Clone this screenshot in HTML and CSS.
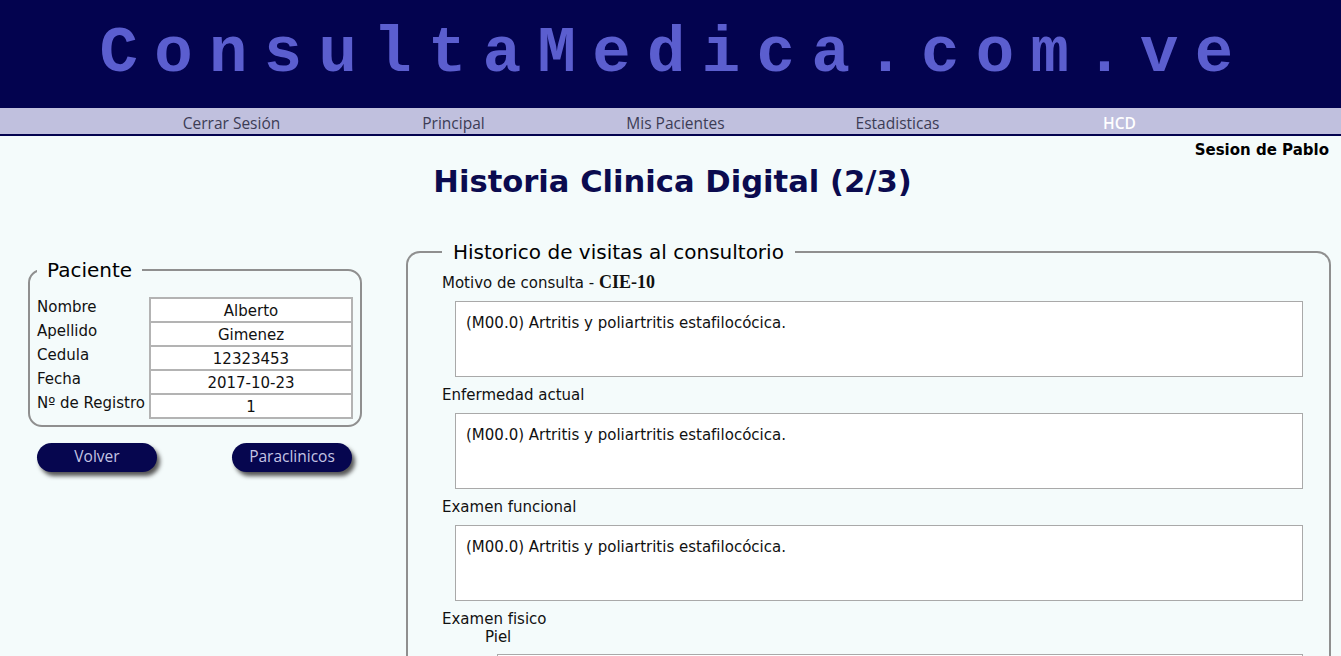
FILE: index.html
```html
<!DOCTYPE html>
<html lang="es">
<head>
<meta charset="utf-8">
<title>ConsultaMedica.com.ve - HCD</title>
<link rel="stylesheet" href="styles.css">
</head>
<body>
<header class="banner">
  <div class="brand">ConsultaMedica.com.ve</div>
</header>
<nav class="menu">
  <a class="menu-item" href="#">Cerrar Sesión</a>
  <a class="menu-item" href="#">Principal</a>
  <a class="menu-item" href="#">Mis Pacientes</a>
  <a class="menu-item" href="#">Estadisticas</a>
  <a class="menu-item active" href="#">HCD</a>
</nav>
<main class="page">
  <div class="session">Sesion de Pablo</div>
  <h1 class="title">Historia Clinica Digital (2/3)</h1>
  <div class="columns">
    <div class="left-col">
      <fieldset class="box patient">
        <legend class="legend">Paciente</legend>
        <table class="ptable">
          <tr><td class="plabel">Nombre</td><td class="pval">Alberto</td></tr>
          <tr><td class="plabel">Apellido</td><td class="pval">Gimenez</td></tr>
          <tr><td class="plabel">Cedula</td><td class="pval">12323453</td></tr>
          <tr><td class="plabel">Fecha</td><td class="pval">2017-10-23</td></tr>
          <tr><td class="plabel">Nº de Registro</td><td class="pval">1</td></tr>
        </table>
      </fieldset>
      <div class="buttons">
        <button class="btn">Volver</button>
        <button class="btn">Paraclinicos</button>
      </div>
    </div>
    <fieldset class="box history">
      <legend class="legend">Historico de visitas al consultorio</legend>
      <div class="flabel first">Motivo de consulta - <b class="cie">CIE-10</b></div>
      <div class="textbox">(M00.0) Artritis y poliartritis estafilocócica.</div>
      <div class="flabel">Enfermedad actual</div>
      <div class="textbox">(M00.0) Artritis y poliartritis estafilocócica.</div>
      <div class="flabel">Examen funcional</div>
      <div class="textbox">(M00.0) Artritis y poliartritis estafilocócica.</div>
      <div class="flabel">Examen fisico</div>
      <div class="sublabel">Piel</div>
      <div class="textbox sub"></div>
    </fieldset>
  </div>
</main>
</body>
</html>
```
FILE: styles.css
```css
html, body {
  margin: 0;
  padding: 0;
}
body {
  background: #f4fbfb;
  font-family: Verdana, "DejaVu Sans", sans-serif;
  color: #111;
  overflow: hidden;
}
.banner {
  background: #03034f;
  height: 108px;
  display: flex;
  align-items: center;
  justify-content: center;
}
.brand {
  font-family: "Liberation Mono", "Courier New", monospace;
  font-weight: bold;
  font-size: 64px;
  letter-spacing: 16.35px;
  color: #5b5ecf;
  line-height: 80px;
  margin-left: 8px;
  margin-top: 0;
}
.menu {
  background: #c0c0de;
  height: 26px;
  border-bottom: 2px solid #03034f;
  display: flex;
  justify-content: center;
  align-items: center;
  padding-left: 10px;
}
.menu-item {
  width: 222px;
  text-align: center;
  font-family: "Open Sans", "Noto Sans", sans-serif;
  font-size: 15.5px;
  color: #3c3c55;
  text-decoration: none;
  line-height: 26px;
  padding-top: 4px;
}
.menu-item.active {
  color: #ffffff;
  font-weight: 600;
}
.page {
  padding: 0;
}
.session {
  text-align: right;
  padding: 5px 12px 0 0;
  font-weight: bold;
  font-size: 15px;
  line-height: 18px;
  color: #000;
}
.title {
  margin: 5px 0 0 4px;
  text-align: center;
  font-size: 30.6px;
  line-height: 36px;
  color: #0b0b4f;
  font-weight: bold;
}
.columns {
  display: flex;
  align-items: flex-start;
  margin-top: 40px;
}
.left-col {
  width: 334px;
  margin-left: 28px;
  margin-top: 18px;
  flex: none;
}
.box {
  border: 2px solid #8f8f8f;
  border-radius: 14px;
  margin: 0;
  min-width: 0;
}
.legend {
  font-size: 20px;
  line-height: 24px;
  padding: 0 11px;
  color: #000;
}
.patient {
  padding: 0 8px 6px 7px;
}
.patient .legend {
  padding: 0 10px;
}
.ptable {
  border-collapse: collapse;
  margin-top: 15px;
  width: 316px;
  font-size: 15px;
}
.plabel {
  width: 112px;
  padding: 0;
  vertical-align: top;
  line-height: 18px;
  white-space: nowrap;
  height: 22px;
}
.pval {
  background: #fff;
  border: 2px solid #b3b3b3;
  text-align: center;
  padding: 0;
  line-height: 20px;
  height: 20px;
  padding-top: 2px;
}
.buttons {
  display: flex;
  justify-content: space-between;
  padding: 0 10px 0 9px;
  margin-top: 16px;
}
.btn {
  width: 120px;
  height: 29px;
  border: none;
  border-radius: 15px;
  background: #06064f;
  color: #c4c4e4;
  font-family: "Open Sans", "Noto Sans", sans-serif;
  font-size: 15.5px;
  line-height: 26px;
  box-shadow: 3px 4px 4px #555;
  padding: 0 0 3px;
}
.history {
  flex: 1;
  margin: 0 10px 0 44px;
  padding: 0 26px 0 34px;
  border-bottom: none;
  border-bottom-left-radius: 0;
  border-bottom-right-radius: 0;
  height: 500px;
}
.flabel {
  font-size: 15px;
  line-height: 18px;
  margin-top: 9px;
}
.cie {
  font-family: "Liberation Serif", "Times New Roman", serif;
  font-size: 18px;
}
.textbox {
  box-sizing: border-box;
  background: #fff;
  border: 1px solid #a9a9a9;
  height: 76px;
  margin: 9px 0 0 13px;
  padding: 10px;
  font-size: 15px;
  line-height: 22px;
}
.sublabel {
  font-size: 15px;
  line-height: 18px;
  padding-left: 43px;
}
.textbox.sub {
  margin: 8px 0 0 55px;
}
```
